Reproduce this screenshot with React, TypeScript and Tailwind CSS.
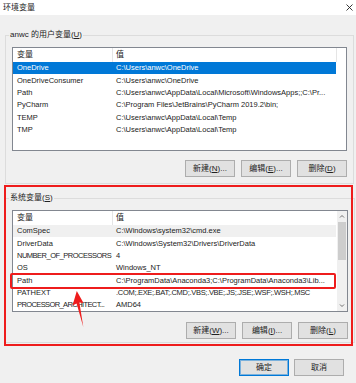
import React from "react";

type Row = { name: string; value: string; nt?: string; vt?: string };

const userRows: Row[] = [
  { name: "OneDrive", value: "C:\\Users\\anwc\\OneDrive" },
  { name: "OneDriveConsumer", value: "C:\\Users\\anwc\\OneDrive" },
  { name: "Path", value: "C:\\Users\\anwc\\AppData\\Local\\Microsoft\\WindowsApps;;C:\\Pr..." },
  { name: "PyCharm", value: "C:\\Program Files\\JetBrains\\PyCharm 2019.2\\bin;" },
  { name: "TEMP", value: "C:\\Users\\anwc\\AppData\\Local\\Temp" },
  { name: "TMP", value: "C:\\Users\\anwc\\AppData\\Local\\Temp" },
];

const sysRows: Row[] = [
  { name: "ComSpec", value: "C:\\Windows\\system32\\cmd.exe" },
  { name: "DriverData", value: "C:\\Windows\\System32\\Drivers\\DriverData" },
  { name: "NUMBER_OF_PROCESSORS", value: "4", nt: "tracking-[-0.5px]" },
  { name: "OS", value: "Windows_NT" },
  { name: "Path", value: "C:\\ProgramData\\Anaconda3;C:\\ProgramData\\Anaconda3\\Lib..." },
  { name: "PATHEXT", value: ".COM;.EXE;.BAT;.CMD;.VBS;.VBE;.JS;.JSE;.WSF;.WSH;.MSC", vt: "tracking-[-0.3px]" },
  { name: "PROCESSOR_ARCHITECT...", value: "AMD64", nt: "tracking-[-0.6px]" },
];

function Btn({ pre, key2, post, primary }: { pre: string; key2?: string; post?: string; primary?: boolean }) {
  return (
    <div
      className={
        "flex h-[17px] w-[50px] items-center justify-center border bg-[#e1e1e1] text-[8px] leading-none text-[#222] " +
        (primary ? "border-[#0078d7] shadow-[inset_0_0_0_1px_rgba(0,120,215,0.45)]" : "border-[#adadad]")
      }
    >
      {pre}
      {key2 ? (
        <>
          (<span className="underline underline-offset-1">{key2}</span>)
        </>
      ) : null}
      {post}
    </div>
  );
}

function ListRow({ r, sel, gray }: { r: Row; sel?: boolean; gray?: boolean }) {
  return (
    <div
      className={
        "flex h-[12.3px] w-[323px] items-center whitespace-nowrap text-[7.5px] leading-none " +
        (sel ? "bg-[#0078d7] text-white" : gray ? "bg-[#f0f0f0] text-[#222]" : "text-[#222]")
      }
    >
      <div className={"w-[100px] shrink-0 pl-[4px] " + (r.nt ?? "")}>{r.name}</div>
      <div className={"shrink-0 pl-[3px] " + (r.vt ?? "")}>{r.value}</div>
    </div>
  );
}

function Header({ full }: { full?: boolean }) {
  return (
    <div className="flex h-[14px] items-center text-[8px] leading-none text-[#222]">
      <div className="flex h-full w-[100px] items-center border-r border-[#e5e5e5] pl-[4px]">变量</div>
      <div className={"flex h-full w-[224px] items-center pl-[3px] " + (full ? "border-r border-[#e5e5e5]" : "")}>值</div>
    </div>
  );
}

export default function App() {
  return (
    <div className="relative flex h-[383px] w-[356px] flex-col overflow-hidden bg-[#f0f0f0] font-['Liberation_Sans','Noto_Sans_CJK_SC',sans-serif] text-[#222]">
      {/* title bar */}
      <div className="flex h-[15px] items-center justify-between bg-white pl-[3px] pr-[2px]">
        <span className="text-[8px] leading-none">环境变量</span>
        <svg width="7" height="7" viewBox="0 0 7 7" className="mr-[1px]">
          <path d="M0.5 0.5 L6.5 6.5 M6.5 0.5 L0.5 6.5" stroke="#222" strokeWidth="0.9" />
        </svg>
      </div>

      {/* user variables */}
      <fieldset className="ml-[5px] mr-[2px] mt-[14px] border border-[#dcdcdc]">
        <legend className="ml-[3px] px-[1px] text-[8px] leading-[12px]">
          anwc 的用户变量(<span className="underline underline-offset-1">U</span>)
        </legend>
        <div className="mx-[6px] mt-[6px] h-[104px] overflow-hidden border border-[#828790] bg-white">
          <Header full />
          {userRows.map((r, i) => (
            <ListRow key={i} r={r} sel={i === 0} />
          ))}
        </div>
        <div className="mt-[9px] flex justify-end gap-[6px] pb-[6px] pr-[6px]">
          <Btn pre="新建" key2="N" post="..." />
          <Btn pre="编辑" key2="E" post="..." />
          <Btn pre="删除" key2="D" />
        </div>
      </fieldset>

      {/* system variables */}
      <fieldset className="ml-[5px] mr-[2px] mt-[8px] border border-[#dcdcdc]">
        <legend className="ml-[3px] px-[1px] text-[8px] leading-[12px]">
          系统变量(<span className="underline underline-offset-1">S</span>)
        </legend>
        <div className="mx-[6px] mt-[6px] flex h-[102px] border border-[#828790] bg-white">
          <div className="flex-1 overflow-hidden">
            <Header />
            {sysRows.map((r, i) => (
              <ListRow key={i} r={r} gray={i === 0} />
            ))}
          </div>
          <div className="flex w-[10px] flex-col items-center bg-[#f0f0f0]">
            <svg width="6" height="9" viewBox="0 0 6 9" className="mt-[1px]">
              <path d="M1 5.5 L3 3.5 L5 5.5" fill="none" stroke="#606060" strokeWidth="0.9" />
            </svg>
            <div className="mt-[1px] h-[38px] w-[8px] bg-[#cdcdcd]" />
            <div className="flex-1" />
            <svg width="6" height="9" viewBox="0 0 6 9" className="mb-[1px]">
              <path d="M1 3.5 L3 5.5 L5 3.5" fill="none" stroke="#606060" strokeWidth="0.9" />
            </svg>
          </div>
        </div>
        <div className="mt-[10px] flex justify-end gap-[6px] pb-[3px] pr-[6px]">
          <Btn pre="新建" key2="W" post="..." />
          <Btn pre="编辑" key2="I" post="..." />
          <Btn pre="删除" key2="L" />
        </div>
      </fieldset>

      {/* OK / Cancel */}
      <div className="mt-[16px] flex justify-end gap-[5px] pr-[12px]">
        <Btn pre="确定" primary />
        <Btn pre="取消" />
      </div>

      {/* annotations */}
      <div className="pointer-events-none absolute left-[4px] top-[185px] h-[161px] w-[349px] border-2 border-[#ee1c1c]" />
      <div className="pointer-events-none absolute left-[10px] top-[273px] h-[16px] w-[326px] rounded-[2px] border-2 border-[#ee1c1c]" />
      <svg
        className="pointer-events-none absolute left-0 top-0"
        width="356"
        height="383"
        viewBox="0 0 356 383"
      >
        <polygon points="76.8,291 72.5,305.5 76.6,303.6 83.3,327 79.4,302.6 83.5,303" fill="#ee1c1c" />
      </svg>
    </div>
  );
}
